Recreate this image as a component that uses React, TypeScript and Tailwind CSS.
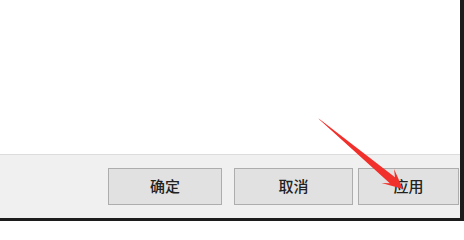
import React from 'react';

const font = { fontFamily: '"Noto Sans CJK SC", "Noto Sans", sans-serif' };

function DialogButton({ label, className }: { label: string; className: string }) {
    return (
        <button
            className={`h-[37px] border border-[#adadad] bg-[#e1e1e1] text-[15px] font-medium text-[#222] flex items-center justify-center ${className}`}
            style={font}
        >
            {label}
        </button>
    );
}

export default function App() {
    return (
        <div className="relative w-[464px] h-[221px] bg-[#1c1c1c] overflow-hidden">
            <div className="flex flex-col w-[460px] h-[218px]">
                {/* dialog body */}
                <div className="h-[154px] bg-white" />
                {/* footer */}
                <div className="flex-1 bg-[#f0f0f0] border-t border-[#dcdcdc] pt-[13px] pl-[108px] flex">
                    <DialogButton label="确定" className="w-[114px]" />
                    <DialogButton label="取消" className="w-[119px] ml-[12px]" />
                    <DialogButton label="应用" className="w-[101px] ml-[5px]" />
                </div>
            </div>

            {/* annotation arrow */}
            <svg
                className="absolute left-0 top-0 pointer-events-none"
                width="464"
                height="221"
                viewBox="0 0 464 221"
            >
                <polygon
                    points="318.4,118.2 395,177.2 394,169 403,189 381.5,183 389.8,183.2 319.6,119.8"
                    fill="#f2302b"
                />
            </svg>
        </div>
    );
}
